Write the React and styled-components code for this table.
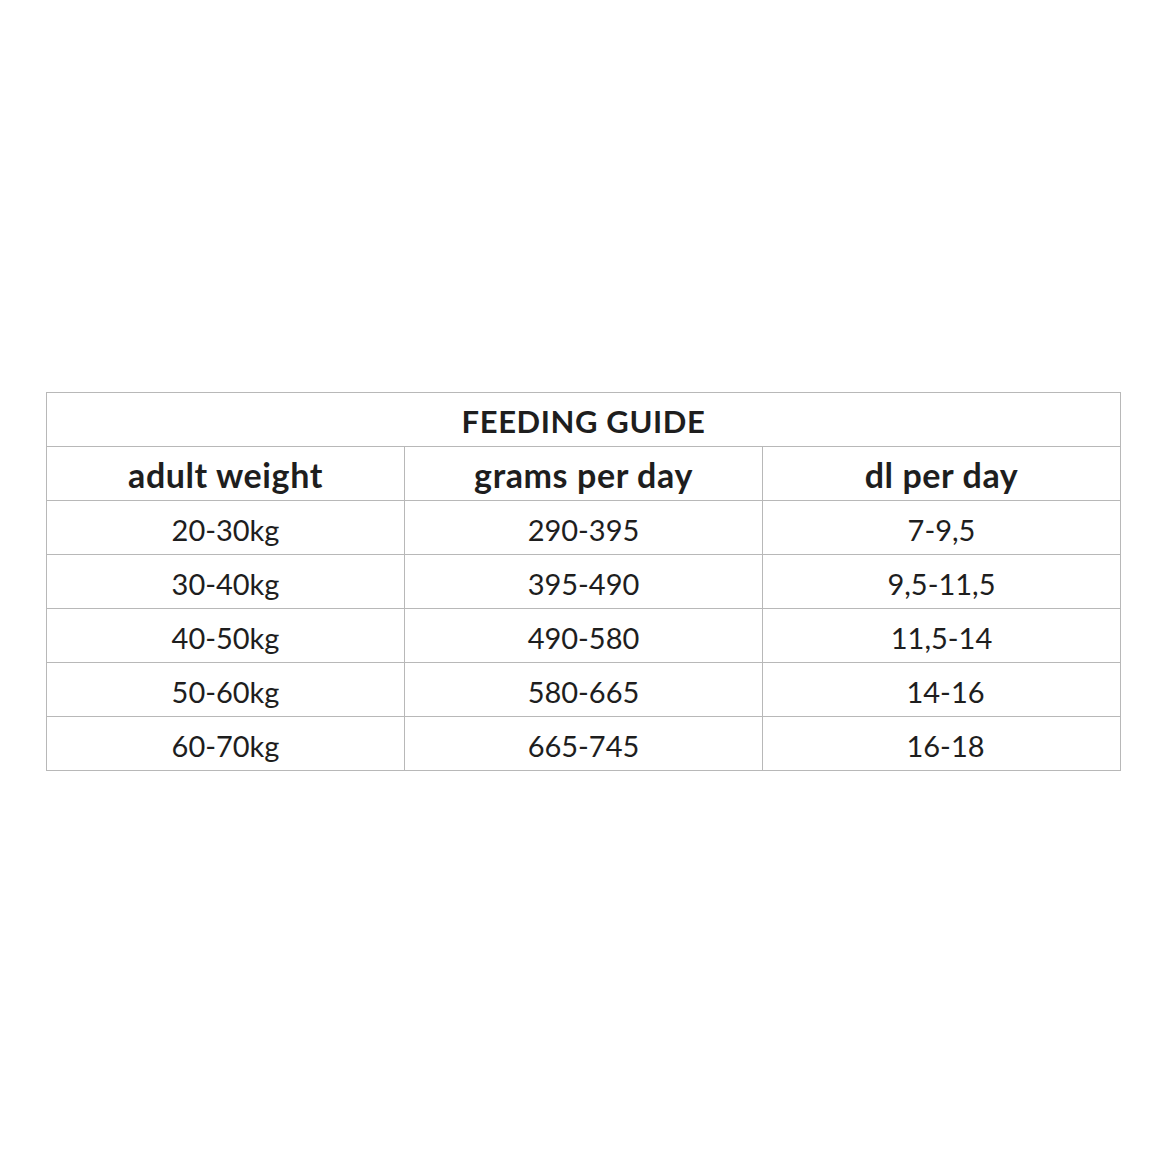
import React from 'react';
import styled, { createGlobalStyle } from 'styled-components';

const GlobalStyle = createGlobalStyle`
  html, body {
    margin: 0;
    padding: 0;
    background: #ffffff;
  }
  body {
    font-family: Lato, "Open Sans", sans-serif;
    color: #1c1c1c;
  }
`;

const Page = styled.div`
  width: 1170px;
  height: 1170px;
  padding: 392px 0 0 46px;
  box-sizing: border-box;
  display: flex;
  align-items: flex-start;
  justify-content: flex-start;
`;

const Table = styled.table`
  width: 1075px;
  border-collapse: collapse;
  table-layout: fixed;
`;

const Cell = styled.td`
  height: 54px;
  box-sizing: border-box;
  padding: 3px 0 0 ${props => props.shift || 0}px;
  line-height: 1;
  border: 1.5px solid #b8b8b8;
  text-align: center;
  vertical-align: middle;
  font-size: ${props => props.size || 29}px;
  font-weight: ${props => (props.bold ? 700 : 400)};
  letter-spacing: ${props => (props.bold ? '0.6px' : '0')};
  color: #1e1e1e;
`;

const rows = [
  ['20-30kg', '290-395', '7-9,5', 0],
  ['30-40kg', '395-490', '9,5-11,5', 0],
  ['40-50kg', '490-580', '11,5-14', 0],
  ['50-60kg', '580-665', '14-16', 8],
  ['60-70kg', '665-745', '16-18', 8],
];

export default function App() {
  return (
    <>
      <GlobalStyle />
      <Page>
        <Table>
          <tbody>
            <tr>
              <Cell bold size={31} colSpan={3}>FEEDING GUIDE</Cell>
            </tr>
            <tr>
              <Cell bold size={34}>adult weight</Cell>
              <Cell bold size={34}>grams per day</Cell>
              <Cell bold size={34}>dl per day</Cell>
            </tr>
            {rows.map(r => (
              <tr key={r[0]}>
                <Cell>{r[0]}</Cell>
                <Cell>{r[1]}</Cell>
                <Cell shift={r[3]}>{r[2]}</Cell>
              </tr>
            ))}
          </tbody>
        </Table>
      </Page>
    </>
  );
}
